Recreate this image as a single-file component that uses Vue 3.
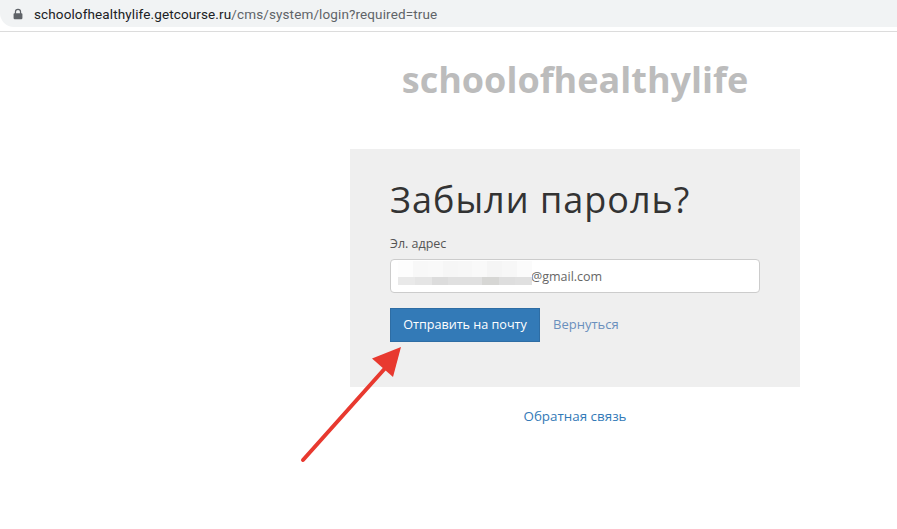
<script setup>
const topCells = ['#fdfdfd','#f8f8f8','#f9f9f9','#f6f6f6','#f7f7f7','#f9f9f9','#f5f5f5','#f7f7f7','#fbfbfb']
const bottomCells = ['#e9e9e9','#e5e5e5','#dcdcdc','#e0e0e0','#e0e0e0','#d6d6d4','#dedede','#e0e0e0']
</script>

<template>
  <div class="page">
    <header class="browser">
      <div class="omnibox">
        <svg class="lock" width="12" height="14" viewBox="0 0 12 14" aria-hidden="true">
          <path d="M2.2 6V4.400a3.800 3.800 0 0 1 7.600 0V6h.5c.6 0 1 .4 1 1v5.200c0 .6-.4 1-1 1H1.700c-.6 0-1-.4-1-1V7c0-.6.4-1 1-1h.5zm1.500 0h4.600V4.400a2.300 2.300 0 0 0-4.600 0V6z" fill="#5f6368" />
        </svg>
        <span class="url"><span class="host">schoolofhealthylife.getcourse.ru</span>/cms/system/login?required=true</span>
      </div>
    </header>

    <main class="content">
      <h2 class="brand">schoolofhealthylife</h2>
      <section class="panel">
        <h1 class="title">Забыли пароль?</h1>
        <label class="label">Эл. адрес</label>
        <div class="input">
          <div class="masked" aria-hidden="true">
            <div class="mask-row mask-top"><i v-for="(c, n) in topCells" :key="n" :style="{ background: c }"></i></div>
            <div class="mask-row mask-bottom"><i v-for="(c, n) in bottomCells" :key="n" :style="{ background: c }"></i></div>
          </div>
          <span class="value">@gmail.com</span>
        </div>
        <div class="actions">
          <button class="send" type="button">Отправить на почту</button>
          <a class="back">Вернуться</a>
        </div>
      </section>
      <a class="feedback">Обратная связь</a>
    </main>

    <svg class="arrow" width="897" height="529" viewBox="0 0 897 529" aria-hidden="true">
      <line x1="303" y1="460" x2="388" y2="365" stroke="#e8392f" stroke-width="4" stroke-linecap="round" />
      <polygon points="401,347 372,358.500 393,377" fill="#e8392f" />
    </svg>
  </div>
</template>

<style>
html, body { margin: 0; background: #fff; }
</style>

<style scoped>
.page {
  position: relative;
  width: 897px;
  height: 529px;
  overflow: hidden;
  background: #fff;
  font-family: "Open Sans", "Noto Sans", sans-serif;
}
.browser {
  height: 32px;
  box-sizing: border-box;
  border-bottom: 1px solid #dcdcdc;
}
.omnibox {
  height: 27px;
  display: flex;
  align-items: center;
  gap: 11px;
  padding-left: 13px;
  background: #f1f3f4;
  border-radius: 0 0 0 14px;
  box-sizing: border-box;
}
.lock { flex: none; width: 10px; height: 12px; }
.url {
  font-family: Roboto, "Liberation Sans", sans-serif;
  font-size: 13.5px;
  letter-spacing: 0.12px;
  color: #5f6368;
  white-space: nowrap;
}
.host { color: #202124; }
.content {
  display: flex;
  flex-direction: column;
  align-items: center;
  width: 450px;
  margin-left: 350px;
}
.brand {
  margin: 26px 0 0;
  height: 91px;
  font-family: "Open Sans", sans-serif;
  font-size: 36px;
  line-height: 44px;
  font-weight: 700;
  color: #bcbcbc;
  white-space: nowrap;
}
.panel {
  width: 450px;
  height: 238px;
  box-sizing: border-box;
  padding: 26px 40px 0;
  background: #efefef;
}
.title {
  margin: 0;
  font-family: "Open Sans", sans-serif;
  font-size: 36px;
  line-height: 50px;
  font-weight: 400;
  letter-spacing: 1px;
  color: #333;
  white-space: nowrap;
}
.label {
  display: block;
  margin-top: 9px;
  height: 25px;
  font-size: 12.5px;
  line-height: 19px;
  color: #555;
}
.input {
  position: relative;
  height: 34px;
  box-sizing: border-box;
  padding-left: 140px;
  background: #fff;
  border: 1px solid #ccc;
  border-radius: 4px;
  font-size: 12.5px;
  line-height: 33px;
  color: #666;
}
.masked {
  position: absolute;
  left: 7px;
  top: 1px;
  width: 134px;
}
.mask-row { display: flex; }
.mask-row i { flex: 1; display: block; }
.mask-top { height: 16px; }
.mask-bottom { height: 8px; }
.actions {
  display: flex;
  align-items: flex-start;
  gap: 13px;
  margin-top: 15px;
}
.send {
  width: 150px;
  height: 34px;
  padding: 0 0 2px;
  font-family: "Open Sans", sans-serif;
  font-size: 12.6px;
  color: #fff;
  background: #337ab7;
  border: 1px solid #2e6da4;
  white-space: nowrap;
}
.back {
  font-size: 13px;
  line-height: 32px;
  color: #6a8fbd;
}
.feedback {
  margin-top: 20px;
  font-size: 13.4px;
  line-height: 19px;
  color: #337ab7;
}
.arrow {
  position: absolute;
  left: 0;
  top: 0;
  pointer-events: none;
}
</style>
